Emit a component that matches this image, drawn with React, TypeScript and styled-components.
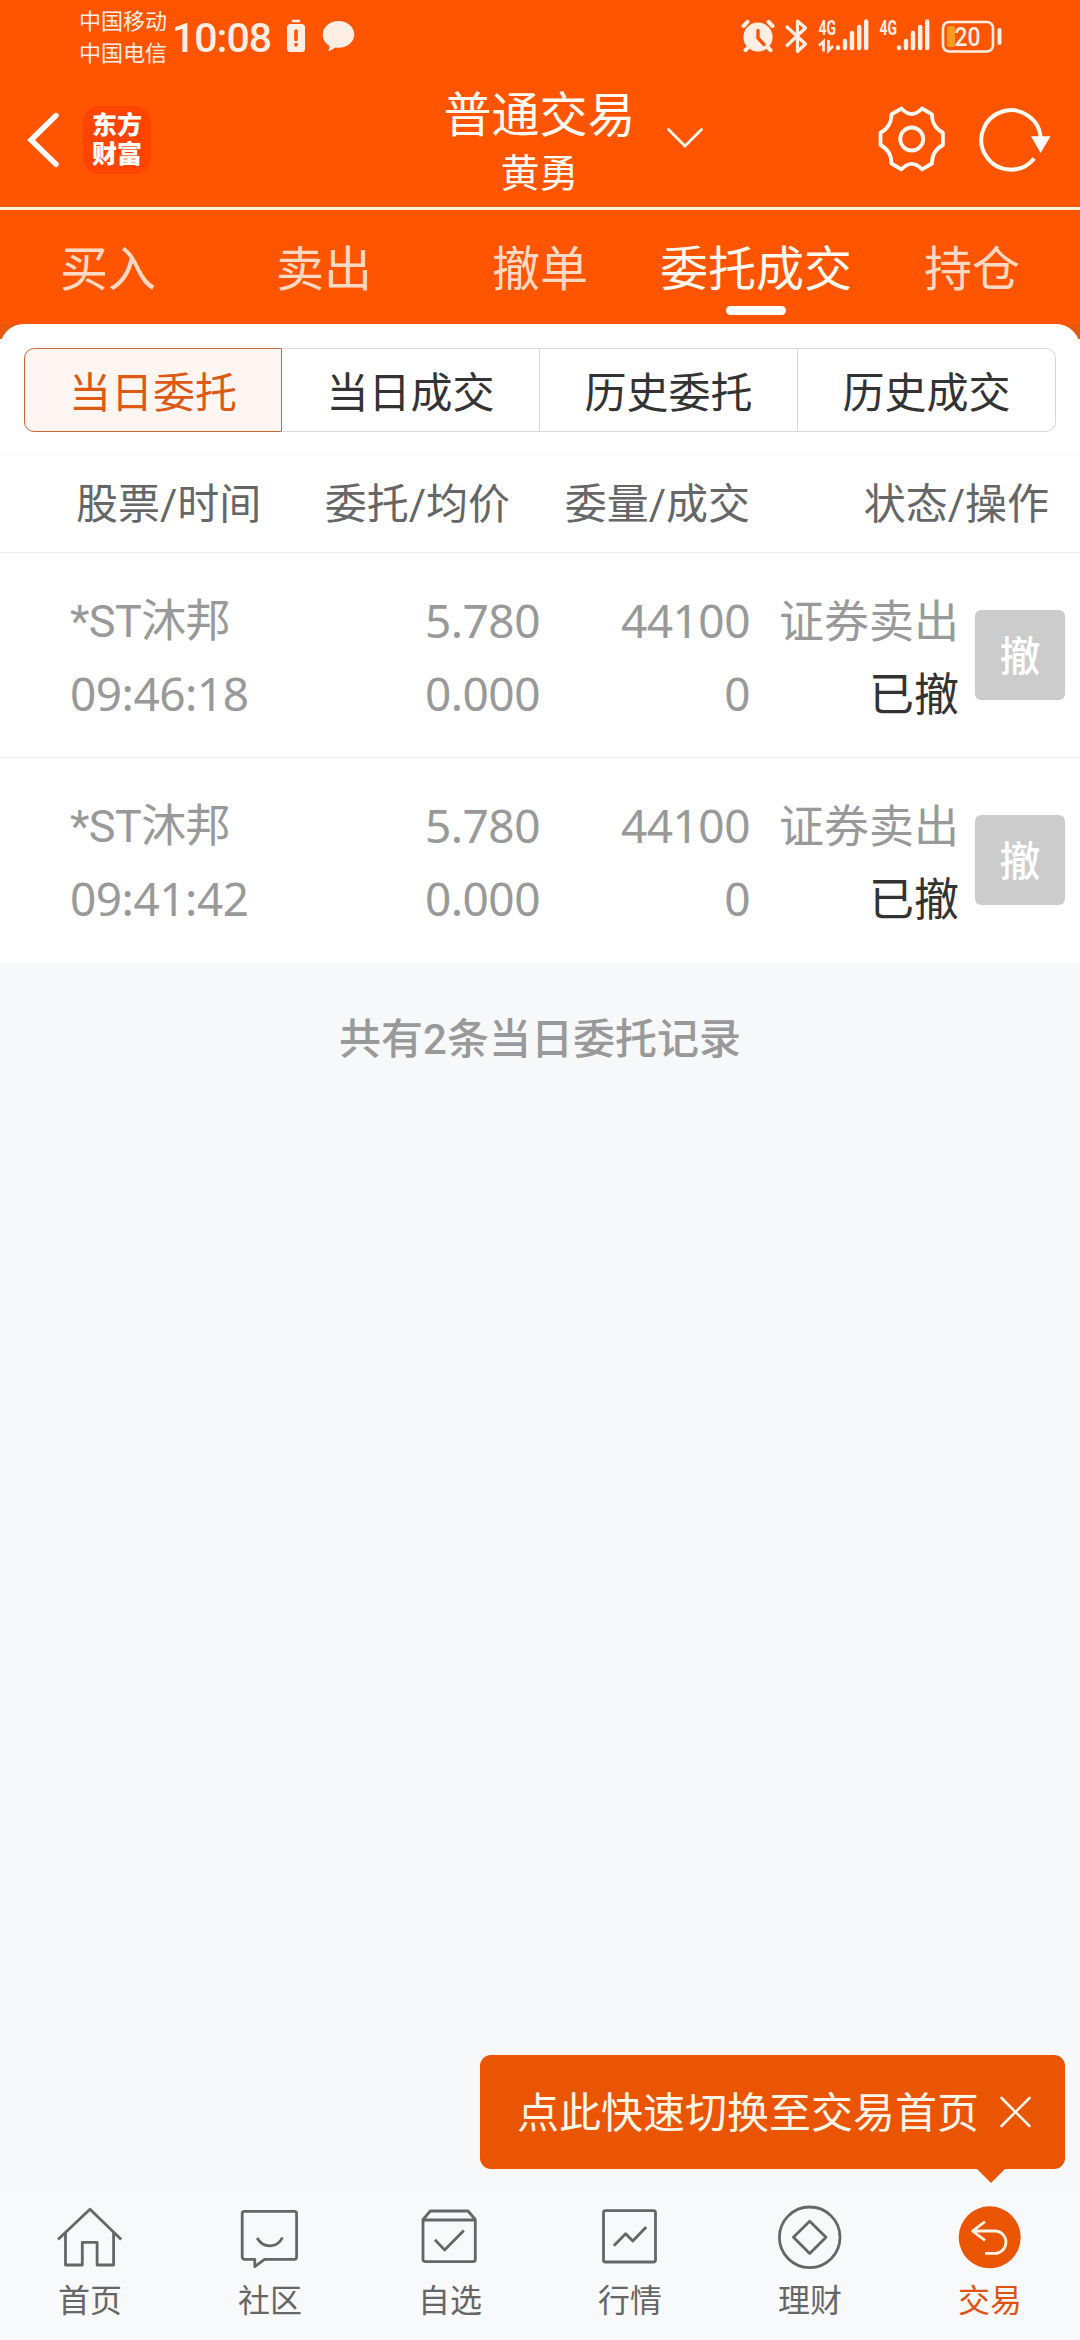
import React from "react";
import styled, { createGlobalStyle, css } from "styled-components";

const ORANGE = "#ff5500";
const DEEP = "#ea5504";
const CREAM = "#ffeee4";
const SANS = `"Noto Sans CJK SC", sans-serif`;
const MIXED = `Roboto, "Noto Sans CJK SC", sans-serif`;

const Global = createGlobalStyle`
  *, *::before, *::after { box-sizing: border-box; }
  body { margin: 0; background: #f7f8fa; font-family: ${SANS}; }
  button { font: inherit; border: 0; padding: 0; margin: 0; background: none; color: inherit; }
  svg { display: block; flex: none; }
`;

const Screen = styled.div`
  width: 1080px;
  height: 2340px;
  display: flex;
  flex-direction: column;
  overflow: hidden;
  background: #f7f8fa;
`;

/* ---------- status bar ---------- */
const StatusBar = styled.div`
  height: 72px;
  padding: 3px 72px 0 79px;
  display: flex;
  justify-content: space-between;
  align-items: flex-start;
  background: ${ORANGE};
  color: ${CREAM};
`;
const StatusGroup = styled.div`
  display: flex;
  align-items: flex-start;
`;
const Carriers = styled.div`
  font-size: 22px;
  line-height: 32px;
  width: 93px;
  white-space: nowrap;
`;
const Clock = styled.div`
  width: 113px;
  font-family: ${MIXED};
  font-size: 41px;
  font-weight: 500;
  line-height: 48px;
  padding-top: 11px;
  letter-spacing: -1px;
`;
const StatusIcons = styled.svg`
  margin-top: 13px;
`;

/* ---------- title bar ---------- */
const TitleBar = styled.header`
  height: 138px;
  display: flex;
  background: ${ORANGE};
  border-bottom: 3px solid #fff0dc;
  box-shadow: inset 0 -1px 0 #e06018;
  color: #fffaf2;
`;
const TitleLeft = styled.div`
  width: 438px;
  padding: 34px 0 0 24px;
  display: flex;
  align-items: flex-start;
`;
const Logo = styled.div`
  width: 68px;
  height: 68px;
  margin-left: 23px;
  padding: 3px 0 0 9px;
  border-radius: 16px;
  background: #ff4400;
  color: #fff;
  font-size: 25px;
  font-weight: 800;
  line-height: 29px;
`;
const TitleText = styled.div`
  width: 203px;
  text-align: center;
  white-space: nowrap;
`;
const Title = styled.div`
  font-size: 48px;
  line-height: 56px;
  padding-top: 11px;
`;
const Account = styled.div`
  font-size: 39px;
  line-height: 44px;
  padding-top: 9px;
  height: 44px;
`;
const Chevron = styled.svg`
  margin: 54px 0 0 24px;
`;
const Actions = styled.div`
  margin-left: auto;
  display: flex;
  padding: 31px 25px 0 0;
  gap: 28px;
`;

/* ---------- tabs ---------- */
const Tabs = styled.nav`
  height: 114px;
  display: grid;
  grid-template-columns: repeat(5, 1fr);
  background: ${ORANGE};
`;
const Tab = styled.button<{ $active?: boolean }>`
  display: flex;
  flex-direction: column;
  align-items: center;
  padding-top: 21px;
  font-size: 48px;
  line-height: 68px;
  white-space: nowrap;
  color: ${(p) => (p.$active ? "#fffaf2" : "#ffd9c3")};
  &::after {
    content: "";
    width: 60px;
    height: 9px;
    margin-top: 7px;
    border-radius: 5px;
    background: ${(p) => (p.$active ? "#fff" : "transparent")};
  }
`;

/* ---------- order panel ---------- */
const PanelBack = styled.div`
  background: linear-gradient(#e8580a 15px, #fff 15px);
`;
const Panel = styled.section`
  background: #fff;
  border-radius: 24px 24px 0 0;
`;
const Segments = styled.div`
  display: grid;
  grid-template-columns: repeat(4, 1fr);
  padding: 24px 24px 23px;
`;
const Segment = styled.button<{ $active?: boolean }>`
  height: 84px;
  padding-bottom: 1px;
  font-size: 42px;
  line-height: 80px;
  color: #333;
  border: 1px solid #d6d8d9;
  border-left-width: 0;
  &:first-child { border-radius: 10px 0 0 10px; border-left-width: 1px; }
  &:last-child { border-radius: 0 10px 10px 0; }
  ${(p) =>
    p.$active &&
    css`
      color: #dc5a14;
      background: #fff6f3;
      border-color: #c8692f;
    `}
`;
const columns = css`
  display: grid;
  grid-template-columns: 240px 230px 210px 209px 1fr;
`;
const HeadRow = styled.div`
  height: 98px;
  display: flex;
  padding: 16px 31px 0 76px;
  border-top: 1px solid #f7f8fa;
  border-bottom: 1px solid #ececec;
  font-family: ${MIXED};
  font-size: 42px;
  line-height: 66px;
  color: #666;
  white-space: nowrap;
`;
const HeadCell = styled.div<{ $w: number }>`
  width: ${(p) => p.$w}px;
  text-align: right;
  &:first-child { text-align: left; }
`;
const Order = styled.div`
  ${columns}
  height: 205px;
  padding: 31px 15px 0 70px;
  border-bottom: 1px solid #ececec;
  font-family: ${MIXED};
  font-size: 46px;
  line-height: 73px;
  color: #999;
  white-space: nowrap;
  &:last-child { border-bottom-color: #fff; }
`;
const Cell = styled.div<{ $right?: boolean; $down?: number }>`
  text-align: ${(p) => (p.$right ? "right" : "left")};
  padding-top: ${(p) => p.$down ?? 0}px;
`;
const Name = styled.div`
  font-size: 45px;
  letter-spacing: -0.6px;
  line-height: 75px;
  height: 73px;
`;
const Num = styled.div`
  font-family: "Noto Sans", sans-serif;
  letter-spacing: -0.5px;
`;
const Kind = styled.div`
  font-size: 45px;
`;
const State = styled.div`
  font-size: 45px;
  color: #333;
`;
const CancelButton = styled.button`
  justify-self: end;
  width: 90px;
  height: 90px;
  margin-top: 26px;
  padding-bottom: 3px;
  border-radius: 6px;
  background: #ccc;
  color: #fff;
  font-family: ${SANS};
  font-size: 41px;
  font-weight: 500;
  line-height: 87px;
`;
const Summary = styled.p`
  margin: 0;
  padding-top: 47px;
  flex: 1;
  text-align: center;
  font-family: ${MIXED};
  font-size: 42px;
  font-weight: 500;
  line-height: 60px;
  color: #999;
`;

/* ---------- bottom bar ---------- */
const BottomBar = styled.nav`
  position: relative;
  height: 150px;
  display: grid;
  grid-template-columns: repeat(6, 1fr);
  background: #f8f9fb;
`;
const NavItem = styled.button<{ $active?: boolean }>`
  display: flex;
  flex-direction: column;
  align-items: center;
  padding-top: 10px;
  font-size: 32px;
  line-height: 46px;
  color: ${(p) => (p.$active ? "#df5312" : "#666")};
  svg { margin-bottom: 3px; }
`;
const Tip = styled.div`
  position: absolute;
  right: 15px;
  top: -135px;
  width: 585px;
  height: 114px;
  padding: 0 0 0 37px;
  display: flex;
  align-items: center;
  gap: 19px;
  border-radius: 11px;
  background: ${DEEP};
  color: #fff6e8;
  font-size: 42px;
  line-height: 60px;
  white-space: nowrap;
  &::after {
    content: "";
    position: absolute;
    right: 59px;
    top: 113px;
    border: 15px solid transparent;
    border-bottom-width: 0;
    border-top-color: ${DEEP};
  }
`;
const TipText = styled.span`
  padding-bottom: 4px;
`;

const bars = (x: number) => (
  <g stroke={CREAM} strokeWidth="4.4" strokeLinecap="round">
    <path d={`M${x} 32v-.6M${x + 7} 32v-7M${x + 14} 32v-15M${x + 21.2} 32v-21M${x + 28.2} 32v-26.5`} />
  </g>
);

const NetLabel = styled.text`
  font-family: "Roboto", sans-serif;
  font-size: 19.5px;
  font-weight: 700;
  fill: ${CREAM};
`;
const BatteryLabel = styled.text`
  font-family: "Roboto", sans-serif;
  font-size: 25px;
  font-weight: 500;
  fill: ${CREAM};
`;

/* Canvas origin is 740,16 in screen space. */
const RightStatus = () => (
  <StatusIcons width="268" height="40" viewBox="0 0 268 40">
    <circle cx="18" cy="21" r="14.6" fill={CREAM} />
    <g stroke={CREAM} strokeWidth="4" strokeLinecap="round" fill="none">
      <path d="M3.5 10l4-4.2M32.5 10l-4-4.2M8.5 31l-3 3.2M27.5 31l3 3.2" />
    </g>
    <path d="M18 14.5v7.5l6 6.500" stroke={ORANGE} strokeWidth="3.4" fill="none" strokeLinecap="round" />
    <path d="M47 11l18.5 17-8 7.500V5l8 7L47 29.500" stroke={CREAM} strokeWidth="3.200" fill="none" strokeLinejoin="round" strokeLinecap="round" />
    <NetLabel x="78.500" y="18.700" textLength="17.500" lengthAdjust="spacingAndGlyphs">4G</NetLabel>
    <path d="M79 29.500l4.500-4v10M88.500 24v10.500l4.500-4.500" stroke={CREAM} strokeWidth="2.800" fill="none" />
    {bars(98)}
    <NetLabel x="139.500" y="18.700" textLength="17.500" lengthAdjust="spacingAndGlyphs">4G</NetLabel>
    {bars(159)}
    <rect x="203" y="6" width="50" height="29.500" rx="6" fill="none" stroke={CREAM} strokeWidth="2.600" />
    <rect x="207" y="10" width="8" height="21" rx="2.500" fill="#ff9a1f" />
    <BatteryLabel x="214.500" y="29.700" textLength="26" lengthAdjust="spacingAndGlyphs">20</BatteryLabel>
    <path d="M259.500 14v13" stroke={CREAM} strokeWidth="4" strokeLinecap="round" />
  </StatusIcons>
);

/* Canvas origin is 285,16 in screen space. */
const LeftStatus = () => (
  <StatusIcons width="72" height="40" viewBox="0 0 72 40">
    <path d="M8 5h6" stroke={CREAM} strokeWidth="2.600" strokeLinecap="round" />
    <rect x="2" y="8" width="18" height="28" rx="3.500" fill={CREAM} />
    <path d="M11 15v8.500M11 28.500v.5" stroke={ORANGE} strokeWidth="3.600" strokeLinecap="round" />
    <path d="M53.500 5c8.800 0 15.800 6 15.800 13.400s-7 13.300-15.800 13.300c-1.300 0-2.500-.1-3.600-.3-1.900 1.900-4 3.200-6.700 3.500 1-1.700 1.300-3.400 1-5.300-4-2.400-6.500-6.500-6.500-11.200C37.700 11 44.700 5 53.500 5z" fill={CREAM} />
  </StatusIcons>
);

const Gear = () => (
  <svg width="72" height="72" viewBox="-36.700 -36 72 72" fill="none" stroke="#fffaf2" strokeWidth="3.800" strokeLinejoin="round">
    <path d="M-10.300-30.500Q0-19.500 10.300-30.500L20.300-24.700C20-17 24-10 31.200-6.300V6C24 10 20 17 20.300 24.500L10.300 30.300Q0 19.300-10.300 30.300L-20.300 24.500C-20 17-24 10-31.200 6V-6.300C-24-10-20-17-20.300-24.700Z" />
    <circle r="11.500" />
  </svg>
);

const Refresh = () => (
  <svg width="80" height="72" viewBox="0 0 80 72" fill="none" stroke="#fffaf2" strokeWidth="4">
    <path d="M59.200 55.500A29.700 29.700 0 1 1 65.700 36" />
    <path d="M56 33.300h19.500L65.600 50z" fill="#fff" stroke="none" />
  </svg>
);

const NavIcon = styled.svg.attrs({ width: 72, height: 72, viewBox: "0 0 72 72" })`
  fill: none;
  stroke: #666;
  stroke-width: 2.8;
  stroke-linejoin: round;
`;

const navItems = [
  {
    label: "首页",
    icon: (
      <NavIcon>
        <path d="M4 39.600L36 9.300l31.200 30.300M11.500 32.500V65h16.800V42.300h14.800V65h16.500V32.500" />
      </NavIcon>
    ),
  },
  {
    label: "社区",
    icon: (
      <NavIcon>
        <path d="M10.400 11.300h50a2.200 2.200 0 0 1 2.200 2.200v43.600a2.200 2.200 0 0 1-2.200 2.200H30.500l-9.700 7.300v-7.300H10.400a2.200 2.200 0 0 1-2.200-2.200V13.500a2.200 2.200 0 0 1 2.200-2.200z" />
        <path d="M23.200 38c5.500 10.500 20 10.500 25.300-.5" />
      </NavIcon>
    ),
  },
  {
    label: "自选",
    icon: (
      <NavIcon>
        <path d="M9 19.500L16.400 11H54l7.300 8.500v40a2.200 2.200 0 0 1-2.200 2.200H11.200A2.200 2.200 0 0 1 9 59.500zM9 20h52.300M20.900 39.700l9.700 10.200L49.800 30.500" />
      </NavIcon>
    ),
  },
  {
    label: "行情",
    icon: (
      <NavIcon>
        <rect x="9.500" y="10.700" width="52" height="51.300" rx="2" />
        <path d="M19.800 45.700l11.900-12 7.100 7.300 13.400-14" />
      </NavIcon>
    ),
  },
  {
    label: "理财",
    icon: (
      <NavIcon>
        <circle cx="35.700" cy="37.300" r="30.300" />
        <path d="M35.700 21.300L52 37.300 35.700 53.500 19.400 37.300z" />
      </NavIcon>
    ),
  },
  {
    label: "交易",
    active: true,
    icon: (
      <NavIcon>
        <circle cx="35.700" cy="37.300" r="31" fill={DEEP} stroke="none" />
        <path d="M31 21.700L18.500 31l12.500 9.300M18.500 31h23.300a11.200 11.200 0 0 1 0 22.300H31" stroke="#fff3e4" />
      </NavIcon>
    ),
  },
];

const tabs = ["买入", "卖出", "撤单", "委托成交", "持仓"];
const segments = ["当日委托", "当日成交", "历史委托", "历史成交"];
const orders = [
  { name: "*ST沐邦", time: "09:46:18", price: "5.780", avg: "0.000", qty: "44100", done: "0" },
  { name: "*ST沐邦", time: "09:41:42", price: "5.780", avg: "0.000", qty: "44100", done: "0" },
];

export default function App() {
  return (
    <Screen>
      <Global />
      <StatusBar>
        <StatusGroup>
          <Carriers>
            中国移动
            <br />
            中国电信
          </Carriers>
          <Clock>10:08</Clock>
          <LeftStatus />
        </StatusGroup>
        <RightStatus />
      </StatusBar>

      <TitleBar>
        <TitleLeft>
          <svg width="36" height="68" viewBox="0 0 36 68" fill="none" stroke="#fff" strokeWidth="5.400" strokeLinecap="round">
            <path d="M32 9.500L7 34l25 24.300" />
          </svg>
          <Logo>
            东方
            <br />
            财富
          </Logo>
        </TitleLeft>
        <TitleText>
          <Title>普通交易</Title>
          <Account>黄勇</Account>
        </TitleText>
        <Chevron width="40" height="24" viewBox="0 0 40 24" fill="none" stroke="#fffaf2" strokeWidth="2.800" strokeLinecap="round">
          <path d="M3.500 3.500L20 20 36.500 3.500" />
        </Chevron>
        <Actions>
          <Gear />
          <Refresh />
        </Actions>
      </TitleBar>

      <Tabs>
        {tabs.map((t) => (
          <Tab key={t} $active={t === "委托成交"}>
            {t}
          </Tab>
        ))}
      </Tabs>

      <PanelBack>
        <Panel>
          <Segments>
            {segments.map((s, i) => (
              <Segment key={s} $active={i === 0}>
                {s}
              </Segment>
            ))}
          </Segments>
          <HeadRow>
            <HeadCell $w={204}>股票/时间</HeadCell>
            <HeadCell $w={230}>委托/均价</HeadCell>
            <HeadCell $w={240}>委量/成交</HeadCell>
            <HeadCell $w={299}>状态/操作</HeadCell>
          </HeadRow>
          {orders.map((o) => (
            <Order key={o.time}>
              <Cell>
                <Name>{o.name}</Name>
                <Num>{o.time}</Num>
              </Cell>
              <Cell $right>
                <Num>{o.price}</Num>
                <Num>{o.avg}</Num>
              </Cell>
              <Cell $right>
                <Num>{o.qty}</Num>
                <Num>{o.done}</Num>
              </Cell>
              <Cell $right $down={2}>
                <Kind>证券卖出</Kind>
                <State>已撤</State>
              </Cell>
              <CancelButton>撤</CancelButton>
            </Order>
          ))}
        </Panel>
      </PanelBack>
      <Summary>共有2条当日委托记录</Summary>

      <BottomBar>
        {navItems.map((n) => (
          <NavItem key={n.label} $active={n.active}>
            {n.icon}
            {n.label}
          </NavItem>
        ))}
        <Tip>
          <TipText>点此快速切换至交易首页</TipText>
          <svg width="34" height="34" viewBox="0 0 34 34" stroke="#fff6e8" strokeWidth="2.600" strokeLinecap="round">
            <path d="M3.500 3l28 28M31.500 3l-28 28" />
          </svg>
        </Tip>
      </BottomBar>
    </Screen>
  );
}
